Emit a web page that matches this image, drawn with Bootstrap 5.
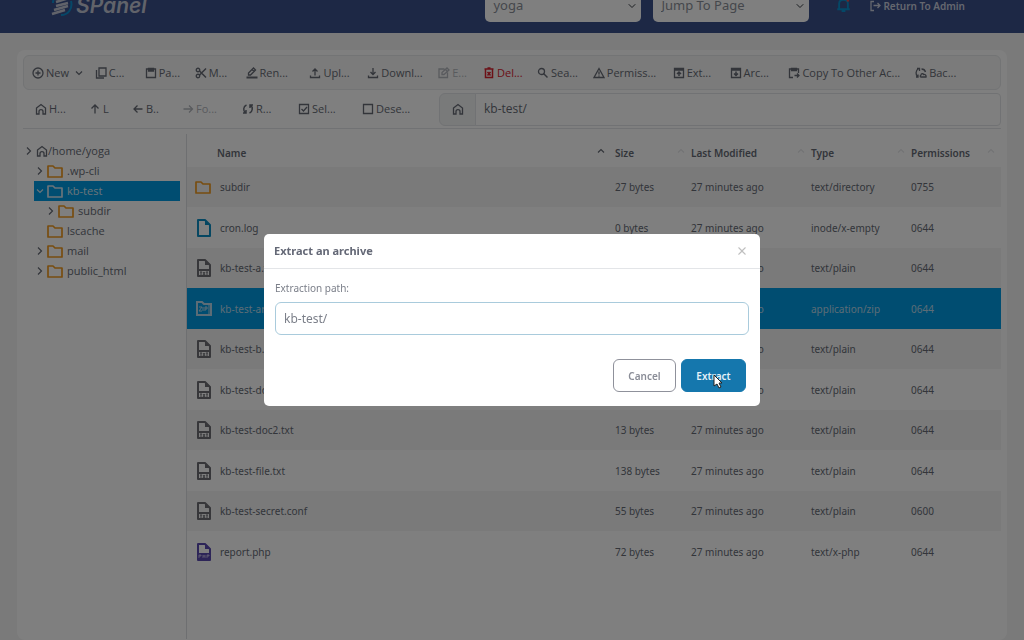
<!DOCTYPE html>
<html lang="en">
<head>
<meta charset="utf-8">
<meta name="viewport" content="width=device-width, initial-scale=1">
<title>SPanel File Manager</title>
<link href="https://cdn.jsdelivr.net/npm/bootstrap@5.3.0/dist/css/bootstrap.min.css" rel="stylesheet">
<style>
  body { font-family: "Noto Sans", "Open Sans", sans-serif; font-size: 10px; line-height: 16px; color: #666b75; background: #f4f4f4; }
  svg { display: block; flex: none; fill: none; stroke: currentColor; stroke-width: 2; }
  .ic { width: 12px; height: 12px; stroke-width: 2.6; }
  .ic-sm { width: 8px; height: 8px; stroke-width: 2.4; }

  /* page header, scrolled partly out of view */
  .topbar { height: 55px; margin-top: -22px; padding: 0 59px 0 50px; background: #3b508a; }
  .brand { color: #c3c7d4; text-decoration: none; gap: 2px; }
  .brand-name { font: italic 600 21px/24px Inter, sans-serif; }
  .topbar .form-select { width: 156px; height: 32px; padding: 0 8px; font-size: 13px; color: #8b8f98; background-color: #fff; border: 0; border-radius: 5px; background-size: 8px; background-position: right 5px center; }
  .bell { color: #0891cf; margin-left: 27px; }
  .return-link { color: #c9cede; font-weight: 600; text-decoration: none; margin-left: 18px; gap: 2px; }

  .panel { margin: 17px 17px 0; padding: 5px 6px 0; min-height: calc(100vh - 50px); background: #fff; border-radius: 8px; }
  .tools { display: grid; align-items: center; font-family: "Open Sans", sans-serif; font-size: 11px; }
  .tools-main { grid-template-columns: 63fr 50fr 50fr 51fr 64fr 58fr 71fr 45fr 54fr 56fr 80fr 57fr 59fr 127fr 77fr; height: 35px; padding: 0 8px; background: #f6f6f6; border: 1px solid #e6e8ea; border-radius: 6px; }
  .tools-nav { grid-template-columns: 54fr 43fr 50fr 60fr 56fr 64fr 77fr 562fr; height: 39px; padding-left: 12px; border-bottom: 1px solid #e2e5e8; }
  .tool { display: flex; align-items: center; gap: 2px; min-width: 0; padding: 0; border: 0; background: none; color: inherit; white-space: nowrap; }
  .tool:disabled { color: #b3b6bc; }
  .tool.del { color: #d8232f; }
  .path-group { height: 33px; }
  .path-group .input-group-text { width: 37px; padding: 0; justify-content: center; color: inherit; background: #f3f4f5; border-color: #e2e5e8; border-radius: 6px; }
  .path-group .form-control { font-size: 12px; padding: 0 8px; color: inherit; border-color: #e2e5e8; border-radius: 4px; }

  .tree { width: 164px; flex: none; padding: 7px 6px 0 11px; margin-top: 5px; border-right: 1px solid #dcdfe2; min-height: calc(100vh - 135px); font-family: "Open Sans", sans-serif; font-size: 11px; }
  .tree a { display: flex; align-items: center; height: 20px; color: inherit; text-decoration: none; }
  .tree .ic-sm { margin-right: 3px; }
  .tree .folder { margin-right: 4px; }
  .tree .root { margin-left: -9px; }
  .tree .lvl1 { padding-left: 2px; }
  .tree .lvl2 { padding-left: 13px; }
  .tree .active { color: #d5e8f4; background: #009be3; }
  .folder { width: 16px; height: 14px; color: #f09a20; }
  .active .folder { color: #d5e8f4; }

  .files { table-layout: fixed; color: inherit; margin: 0; border-collapse: collapse; width: 100%; }
  .files th { height: 34px; padding: 5px 6px 0 0; font-weight: 600; }
  .files td { height: 40px; padding: 0; }
  .files tbody tr:nth-child(even) td { height: 41px; }
  .files tbody tr:nth-child(odd) { background: #f4f4f4; }
  .files tbody tr.picked { background: #009be3; color: #b9d9ec; }
  .c-icon { width: 33px; } .c-size { width: 76px; } .c-date { width: 120px; } .c-type { width: 100px; } .c-perm { width: 90px; }
  .files td:first-child { padding-left: 8px; }
  .files .first { padding-left: 30px; }
  .sorter { color: #e6e7ea; margin-top: -4px; }
  .sorted .sorter { color: inherit; }
  .doc { width: 18px; height: 20px; color: #6e6f75; }

  .modal-dialog { max-width: 496px; }
  .modal-content { border: 0; border-radius: 5px; }
  .modal-header { height: 35px; padding: 0 10px; border-color: #e3e5e8; }
  .modal-title { font-size: 11px; line-height: 16px; font-weight: 700; color: #646876; }
  .modal-header .btn-close { margin: 0 3px 0 auto; padding: 0; width: 10px; height: 10px; background-size: 10px; opacity: .25; }
  .modal-body { padding: 11px 11px 0; }
  .modal-body label { color: #7b7f89; margin-bottom: 6px; }
  .modal-body .form-control { height: 33px; padding: 0 8px; font-size: 12px; color: #7b7f89; border: 1px solid #a9cbdc; border-radius: 6px; }
  .modal-footer { border: 0; padding: 24px 14px 14px; gap: 5px; }
  .modal-footer .btn { height: 33px; min-width: 63px; margin: 0; padding: 0 13px; font-size: 10px; font-weight: 600; line-height: 16px; border-radius: 6px; }
  .btn-cancel { color: #8a8d97; background: #fff; border-color: #8f919b; }
  .modal-footer .btn-extract, .btn-extract:hover { min-width: 65px; color: #e4f1f8; background: #1577ad; border-color: #1577ad; }
  .pointer { position: absolute; left: 31px; top: 14px; width: 10px; height: 15px; }
</style>
</head>
<body class="overflow-hidden">
<svg class="d-none">
  <symbol id="i-new" viewBox="0 0 24 24"><circle cx="12" cy="12" r="10"/><path d="M12 7v10M7 12h10"/></symbol>
  <symbol id="i-down" viewBox="0 0 16 16"><path d="M2 5l6 6 6-6"/></symbol>
  <symbol id="i-up" viewBox="0 0 16 16"><path d="M2 11l6-6 6 6"/></symbol>
  <symbol id="i-right" viewBox="0 0 16 16"><path d="M4 1l7 7-7 7"/></symbol>
  <symbol id="i-copy" viewBox="0 0 24 24"><path d="M8 2h14v16H8zM3 6v16h15"/></symbol>
  <symbol id="i-paste" viewBox="0 0 24 24"><path d="M3 4h18v17H3z"/><path d="M7 3h10v5H7z" fill="currentColor"/></symbol>
  <symbol id="i-cut" viewBox="0 0 24 24"><circle cx="6" cy="6" r="3.5"/><circle cx="6" cy="18" r="3.5"/><path d="M9 8l13 13M9 16L22 3" stroke-width="3"/></symbol>
  <symbol id="i-rename" viewBox="0 0 24 24"><path d="M5 16v-4L15 2l4 4L9 16zM12 5l4 4"/><path d="M1 21h22" stroke-width="4"/></symbol>
  <symbol id="i-upload" viewBox="0 0 24 24"><path d="M12 17V4M7 9l5-5 5 5M3 17v4h18v-4"/></symbol>
  <symbol id="i-download" viewBox="0 0 24 24"><path d="M12 2v13M7 10l5 5 5-5M3 17v4h18v-4"/></symbol>
  <symbol id="i-edit" viewBox="0 0 24 24"><path d="M13 4H2v17h17V11M8 15v-4l10-9 4 4-10 9zM15 5l3 3"/></symbol>
  <symbol id="i-trash" viewBox="0 0 24 24"><path d="M3 4h18M9 2h6M5 5v16h14V5M9 10l6 7M15 10l-6 7" stroke-width="3"/></symbol>
  <symbol id="i-search" viewBox="0 0 24 24"><circle cx="9" cy="9" r="6"/><path d="M13 13l8 8" stroke-width="3"/></symbol>
  <symbol id="i-warn" viewBox="0 0 24 24"><path d="M12 3L2 21h20zM12 9v6M12 17v2"/></symbol>
  <symbol id="i-extract" viewBox="0 0 24 24"><path d="M3 3h18v18H3zM3 6h18"/><path d="M12 18v-7M8 14l4-4 4 4" stroke-width="3"/></symbol>
  <symbol id="i-archive" viewBox="0 0 24 24"><path d="M3 3h18v18H3zM3 6h18"/><path d="M12 9v7M8 13l4 4 4-4" stroke-width="3"/></symbol>
  <symbol id="i-copyto" viewBox="0 0 24 24"><path d="M10 21H3V4h18v8M13 17h9M18 13l4 4-4 4"/><path d="M7 3h10v4H7z" fill="currentColor"/></symbol>
  <symbol id="i-backup" viewBox="0 0 24 24"><path d="M7 3C1 7 1 15 5 20M2 20h4v-5M4 3h5v5M12 20h10c1-4-3-6-5-5-1-3-5-2-5 1-2 1-2 4 0 4zM13 4c4 0 7 2 8 6"/></symbol>
  <symbol id="i-home" viewBox="0 0 24 24"><path d="M3 10l9-7 9 7v12h-5v-5c0-5-8-5-8 0v5H3z"/></symbol>
  <symbol id="i-arrow" viewBox="0 0 24 24"><path d="M3 12h18M14 5l7 7-7 7"/></symbol>
  <symbol id="i-arrow-up" viewBox="0 0 24 24"><path d="M12 21V4M5 11l7-7 7 7"/></symbol>
  <symbol id="i-arrow-left" viewBox="0 0 24 24"><path d="M21 12H4M11 5l-7 7 7 7"/></symbol>
  <symbol id="i-reload" viewBox="0 0 24 24"><path d="M9 4C2 7 2 16 7 20M2 20h6v-6M15 20c7-3 7-12 2-16M22 4h-6v6" stroke-width="3"/></symbol>
  <symbol id="i-check" viewBox="0 0 24 24"><path d="M3 3h18v18H3zM7 12l4 4 7-8"/></symbol>
  <symbol id="i-box" viewBox="0 0 24 24"><path d="M3 3h18v18H3z"/></symbol>
  <symbol id="i-exit" viewBox="0 0 24 24"><path d="M10 3H4v18h6M9 11h12M17 6l5 5-5 5"/></symbol>
  <symbol id="i-folder" viewBox="0 0 16 14"><path d="M1 2h5l2 2h7v9H1z" stroke-width="1.7" stroke-linejoin="round"/></symbol>
  <symbol id="i-file" viewBox="0 0 18 20"><path d="M3 2h7l5 5v11H3z" stroke-linejoin="round"/><path d="M10 2v5h5z" fill="currentColor" stroke="none"/></symbol>
  <symbol id="i-txt" viewBox="0 0 18 20"><path d="M3 2h7l5 5v11H3zM3 12h12" stroke-linejoin="round"/><path d="M10 2v5h5z" fill="currentColor" stroke="none"/><path d="M5 14h2M6 14v3M8 14l2 3M10 14l-2 3M11 14h2M12 14v3" stroke-width="1"/></symbol>
  <symbol id="i-zip" viewBox="0 0 18 20"><path d="M2 3h5l2 2h7v11H2z" stroke-width="2"/><path d="M4 8h3l-3 4h3M8 8v4M10 12V8h2v2h-2M14 6v9" stroke-width="1"/></symbol>
  <symbol id="i-php" viewBox="0 0 18 20"><path d="M3 2h7l5 5v11H3z" stroke-linejoin="round"/><path d="M10 2v5h5zM2 11h14v7H2z" fill="currentColor" stroke="none"/><path d="M4 16v-3h2v1H4M8 13v3M10 13v3M8 14h2M12 16v-3h2v1h-2" stroke="#d8d2f2" stroke-width=".7"/></symbol>
</svg>

<header class="topbar d-flex align-items-center">
  <a class="brand d-flex align-items-center me-auto" href="#">
    <svg width="24" height="28" viewBox="0 0 24 28"><path d="M3 11C3 6 6 3 9 1M21 9c2 8-3 14-10 14" stroke="#0d8fd0" stroke-width="2"/><path d="M7 6L21 2M6 10l13-4M6 14l12-3M4 18l14-4M2 22l13-4" stroke-width="2.6"/></svg>
    <span class="brand-name">SPanel</span>
  </a>
  <div class="d-flex gap-2">
    <select class="form-select me-1" aria-label="Account"><option>yoga</option></select>
    <select class="form-select" aria-label="Jump to page"><option>Jump To Page</option></select>
  </div>
  <svg class="bell" width="15" height="15" viewBox="0 0 24 24"><path d="M5 18V9c0-8 14-8 14 0v9M2 18h20M9 21h6" stroke-width="3"/><circle cx="19" cy="4" r="2" fill="#e14b4b" stroke="none"/></svg>
  <a class="return-link d-flex align-items-center" href="#"><svg class="ic"><use href="#i-exit"/></svg>Return To Admin</a>
</header>

<main class="panel">
  <div class="tools tools-main">
    <button class="tool"><svg class="ic"><use href="#i-new"/></svg>New<svg class="ic-sm ms-1"><use href="#i-down"/></svg></button>
    <button class="tool"><svg class="ic"><use href="#i-copy"/></svg>C...</button>
    <button class="tool"><svg class="ic"><use href="#i-paste"/></svg>Pa...</button>
    <button class="tool"><svg class="ic"><use href="#i-cut"/></svg>M...</button>
    <button class="tool"><svg class="ic"><use href="#i-rename"/></svg>Ren...</button>
    <button class="tool"><svg class="ic"><use href="#i-upload"/></svg>Upl...</button>
    <button class="tool"><svg class="ic"><use href="#i-download"/></svg>Downl...</button>
    <button class="tool" disabled><svg class="ic"><use href="#i-edit"/></svg>E...</button>
    <button class="tool del"><svg class="ic"><use href="#i-trash"/></svg>Del...</button>
    <button class="tool"><svg class="ic"><use href="#i-search"/></svg>Sea...</button>
    <button class="tool"><svg class="ic"><use href="#i-warn"/></svg>Permiss...</button>
    <button class="tool"><svg class="ic"><use href="#i-extract"/></svg>Ext...</button>
    <button class="tool"><svg class="ic"><use href="#i-archive"/></svg>Arc...</button>
    <button class="tool"><svg class="ic"><use href="#i-copyto"/></svg>Copy To Other Ac...</button>
    <button class="tool"><svg class="ic"><use href="#i-backup"/></svg>Bac...</button>
  </div>
  <div class="tools tools-nav">
    <button class="tool"><svg class="ic"><use href="#i-home"/></svg>H...</button>
    <button class="tool"><svg class="ic"><use href="#i-arrow-up"/></svg>L</button>
    <button class="tool"><svg class="ic"><use href="#i-arrow-left"/></svg>B..</button>
    <button class="tool" disabled><svg class="ic"><use href="#i-arrow"/></svg>Fo...</button>
    <button class="tool"><svg class="ic"><use href="#i-reload"/></svg>R...</button>
    <button class="tool"><svg class="ic"><use href="#i-check"/></svg>Sel...</button>
    <button class="tool"><svg class="ic"><use href="#i-box"/></svg>Dese...</button>
    <div class="input-group path-group">
      <span class="input-group-text"><svg class="ic"><use href="#i-home"/></svg></span>
      <input class="form-control" type="text" value="kb-test/" aria-label="Current path">
    </div>
  </div>

  <div class="d-flex">
    <nav class="tree">
      <a class="root" href="#"><svg class="ic-sm"><use href="#i-right"/></svg><svg class="ic"><use href="#i-home"/></svg>/home/yoga</a>
      <a class="lvl1" href="#"><svg class="ic-sm"><use href="#i-right"/></svg><svg class="folder"><use href="#i-folder"/></svg>.wp-cli</a>
      <a class="lvl1 active" href="#"><svg class="ic-sm"><use href="#i-down"/></svg><svg class="folder"><use href="#i-folder"/></svg>kb-test</a>
      <a class="lvl2" href="#"><svg class="ic-sm"><use href="#i-right"/></svg><svg class="folder"><use href="#i-folder"/></svg>subdir</a>
      <a class="lvl1" href="#"><svg class="ic-sm"></svg><svg class="folder"><use href="#i-folder"/></svg>lscache</a>
      <a class="lvl1" href="#"><svg class="ic-sm"><use href="#i-right"/></svg><svg class="folder"><use href="#i-folder"/></svg>mail</a>
      <a class="lvl1" href="#"><svg class="ic-sm"><use href="#i-right"/></svg><svg class="folder"><use href="#i-folder"/></svg>public_html</a>
    </nav>
    <div class="flex-grow-1 pt-1">
      <table class="files">
        <colgroup><col class="c-icon"><col><col class="c-size"><col class="c-date"><col class="c-type"><col class="c-perm"></colgroup>
        <thead><tr>
          <th class="first sorted" colspan="2"><div class="d-flex align-items-center justify-content-between">Name<svg class="ic-sm sorter me-1"><use href="#i-up"/></svg></div></th>
          <th><div class="d-flex align-items-center justify-content-between">Size<svg class="ic-sm sorter"><use href="#i-up"/></svg></div></th>
          <th><div class="d-flex align-items-center justify-content-between">Last Modified<svg class="ic-sm sorter"><use href="#i-up"/></svg></div></th>
          <th><div class="d-flex align-items-center justify-content-between">Type<svg class="ic-sm sorter"><use href="#i-up"/></svg></div></th>
          <th><div class="d-flex align-items-center justify-content-between">Permissions<svg class="ic-sm sorter"><use href="#i-up"/></svg></div></th>
        </tr></thead>
        <tbody>
          <tr><td><svg class="folder"><use href="#i-folder"/></svg></td><td>subdir</td><td>27 bytes</td><td>27 minutes ago</td><td>text/directory</td><td>0755</td></tr>
          <tr><td><svg class="doc" style="color:#0d8fc4"><use href="#i-file"/></svg></td><td>cron.log</td><td>0 bytes</td><td>27 minutes ago</td><td>inode/x-empty</td><td>0644</td></tr>
          <tr><td><svg class="doc"><use href="#i-txt"/></svg></td><td>kb-test-a.txt</td><td>19 bytes</td><td>27 minutes ago</td><td>text/plain</td><td>0644</td></tr>
          <tr class="picked"><td><svg class="doc text-reset"><use href="#i-zip"/></svg></td><td>kb-test-archive.zip</td><td>1 KB</td><td>27 minutes ago</td><td>application/zip</td><td>0644</td></tr>
          <tr><td><svg class="doc"><use href="#i-txt"/></svg></td><td>kb-test-b.txt</td><td>19 bytes</td><td>27 minutes ago</td><td>text/plain</td><td>0644</td></tr>
          <tr><td><svg class="doc"><use href="#i-txt"/></svg></td><td>kb-test-doc1.txt</td><td>13 bytes</td><td>27 minutes ago</td><td>text/plain</td><td>0644</td></tr>
          <tr><td><svg class="doc"><use href="#i-txt"/></svg></td><td>kb-test-doc2.txt</td><td>13 bytes</td><td>27 minutes ago</td><td>text/plain</td><td>0644</td></tr>
          <tr><td><svg class="doc"><use href="#i-txt"/></svg></td><td>kb-test-file.txt</td><td>138 bytes</td><td>27 minutes ago</td><td>text/plain</td><td>0644</td></tr>
          <tr><td><svg class="doc"><use href="#i-txt"/></svg></td><td>kb-test-secret.conf</td><td>55 bytes</td><td>27 minutes ago</td><td>text/plain</td><td>0600</td></tr>
          <tr><td><svg class="doc" style="color:#5b4bb0"><use href="#i-php"/></svg></td><td>report.php</td><td>72 bytes</td><td>27 minutes ago</td><td>text/x-php</td><td>0644</td></tr>
        </tbody>
      </table>
    </div>
  </div>
</main>

<div class="modal-backdrop show"></div>
<div class="modal show d-block" tabindex="-1" role="dialog" aria-labelledby="extract-title">
  <div class="modal-dialog modal-dialog-centered">
    <div class="modal-content">
      <div class="modal-header">
        <h1 class="modal-title" id="extract-title">Extract an archive</h1>
        <button type="button" class="btn-close" aria-label="Close"></button>
      </div>
      <div class="modal-body">
        <label class="d-block" for="extract-path">Extraction path:</label>
        <input class="form-control" id="extract-path" type="text" value="kb-test/">
      </div>
      <div class="modal-footer">
        <button type="button" class="btn btn-cancel">Cancel</button>
        <button type="button" class="btn btn-extract position-relative">Extract<svg class="pointer" viewBox="0 0 10 15"><path d="M1 1v11l3-2 2 4 2-1-2-4h3z" fill="#fff" stroke="#222" stroke-width="1"/></svg></button>
      </div>
    </div>
  </div>
</div>
<script src="https://cdn.jsdelivr.net/npm/bootstrap@5.3.0/dist/js/bootstrap.bundle.min.js"></script>
</body>
</html>
